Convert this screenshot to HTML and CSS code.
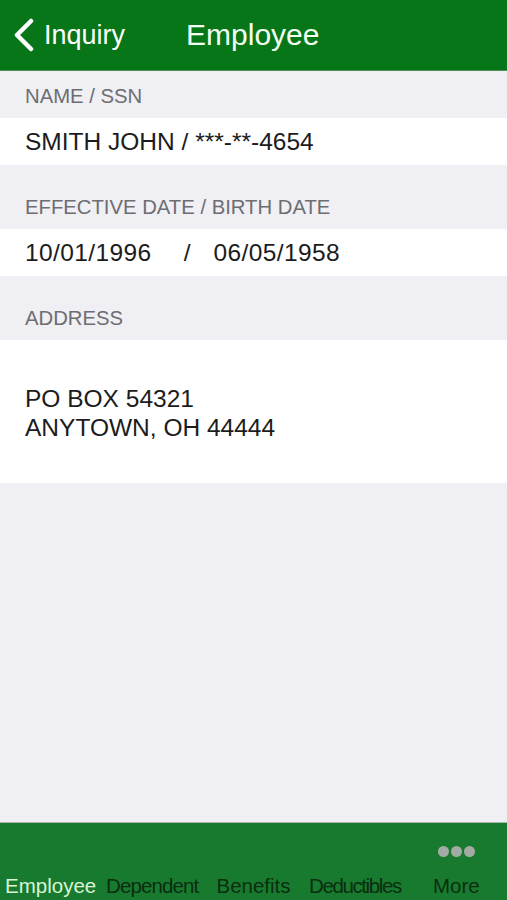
FILE: index.html
```html
<!DOCTYPE html>
<html lang="en">
<head>
    <meta charset="UTF-8">
    <meta name="viewport" content="width=device-width, initial-scale=1.0">
    <title>Employee</title>
    <link rel="stylesheet" href="styles.css">
</head>
<body>

<div class="app">
    <header class="navbar">
        <a class="back" href="#">
            <svg class="chevron" width="24" height="34" viewBox="0 0 24 34">
                <path d="M19 3 L5 17 L19 31" fill="none" stroke="#fff" stroke-width="4.5" stroke-linecap="round" stroke-linejoin="round"/>
            </svg>
            <span>Inquiry</span>
        </a>
        <h1 class="title">Employee</h1>
    </header>

    <main class="content">
        <div class="section-label short">NAME / SSN</div>
        <div class="row">SMITH JOHN / ***-**-4654</div>

        <div class="section-label">EFFECTIVE DATE / BIRTH DATE</div>
        <div class="row">
            <span class="date">10/01/1996</span>
            <span class="sep">/</span>
            <span class="date second">06/05/1958</span>
        </div>

        <div class="section-label">ADDRESS</div>
        <div class="row address">
            PO BOX 54321<br>
            ANYTOWN, OH 44444
        </div>
    </main>

    <nav class="tabbar">
        <div class="tab active">Employee</div>
        <div class="tab tight">Dependent</div>
        <div class="tab">Benefits</div>
        <div class="tab tighter">Deductibles</div>
        <div class="tab more">
            <span class="dots"><i></i><i></i><i></i></span>
            More
        </div>
    </nav>
</div>

</body>
</html>
```

FILE: styles.css
```css
body {
    margin: 0;
    font-family: "Liberation Sans", Arial, sans-serif;
    background-color: #efeff4;
}

.app {
    display: flex;
    flex-direction: column;
    height: 100vh;
}

.navbar {
    height: 70px;
    background-color: #067619;
    border-bottom: 1px solid #4e8c56;
    display: flex;
    align-items: center;
    color: #fff;
}

.back {
    display: flex;
    align-items: center;
    color: #fff;
    text-decoration: none;
    font-size: 27px;
    margin-left: 12px;
    gap: 8px;
}

.title {
    margin: 0 0 0 61px;
    font-size: 30px;
    font-weight: normal;
    color: #f2fff2;
}

.content {
    flex: 1;
}

.section-label {
    height: 64px;
    box-sizing: border-box;
    display: flex;
    align-items: flex-end;
    padding: 0 0 11px 25px;
    line-height: 22px;
    font-size: 20.3px;
    color: #6d6d72;
    white-space: pre;
}

.section-label.short {
    height: 47px;
}

.row {
    height: 47px;
    background-color: #fff;
    display: flex;
    align-items: center;
    padding-left: 25px;
    font-size: 24.5px;
    color: #1c1c1c;
}

.row .date {
    letter-spacing: 0.4px;
}

.row .sep {
    margin-left: 32px;
}

.row .second {
    margin-left: 23px;
}

.row.address {
    height: 143px;
    display: block;
    box-sizing: border-box;
    padding-top: 44px;
    line-height: 29px;
}

.tabbar {
    height: 77px;
    background-color: #187a2e;
    border-top: 1px solid #a9b4ab;
    display: grid;
    grid-template-columns: repeat(5, 1fr);
}

.tab {
    display: flex;
    flex-direction: column;
    justify-content: flex-end;
    align-items: center;
    padding-bottom: 2px;
    font-size: 20.5px;
    line-height: 24px;
    color: #0b2d10;
    white-space: nowrap;
}

.tab.active {
    color: #d9f5d6;
}

.tab.tight {
    letter-spacing: -0.9px;
}

.tab.tighter {
    letter-spacing: -1.4px;
}

.dots {
    display: flex;
    gap: 2px;
    margin-bottom: 17px;
}

.dots i {
    width: 11px;
    height: 11px;
    border-radius: 50%;
    background-color: #a3aca4;
}
```
